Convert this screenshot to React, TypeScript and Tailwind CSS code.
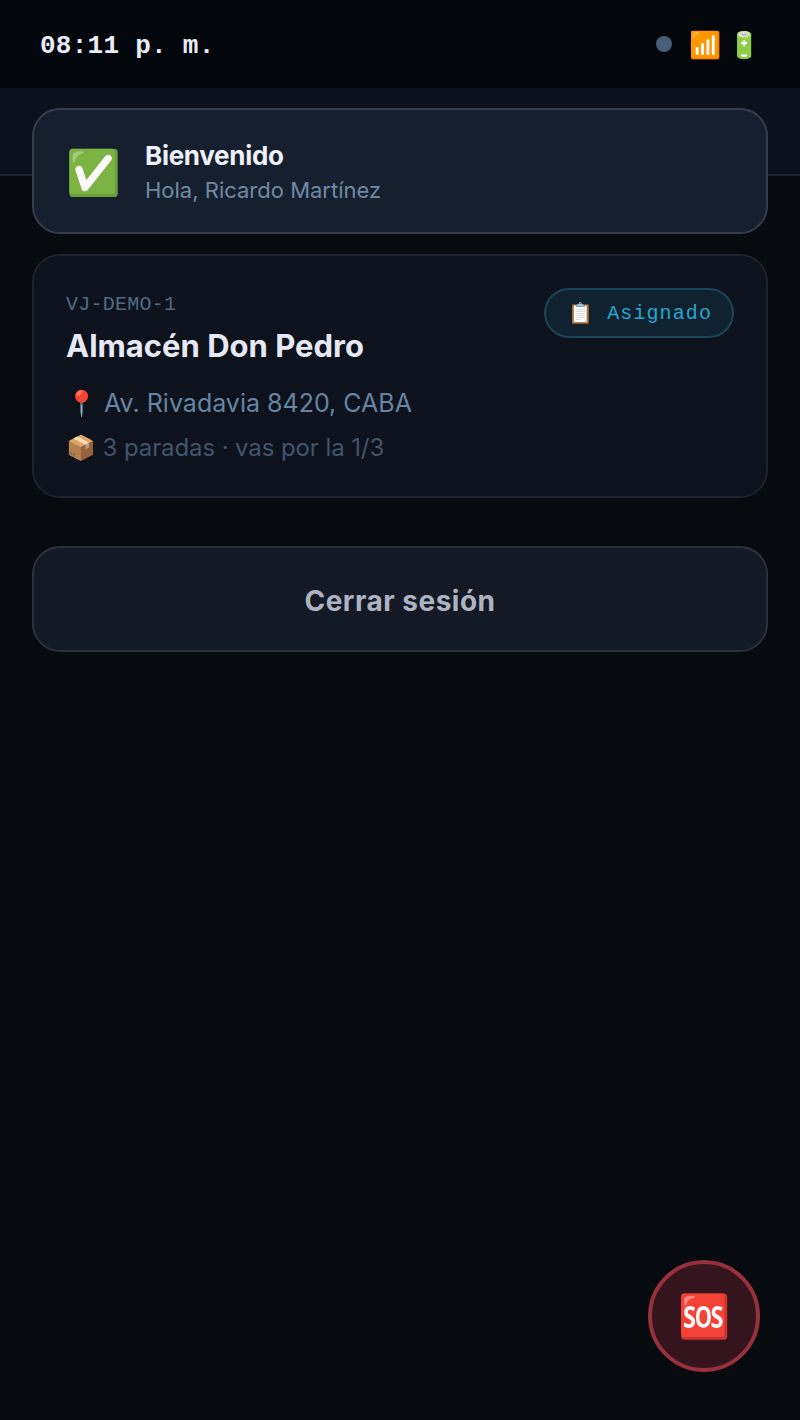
export default function App() {
  const sans = "font-['Inter','Noto_Sans',sans-serif]";
  return (
    <div className={`relative flex h-[1420px] w-[800px] flex-col overflow-hidden bg-[#070b10] ${sans}`}>
      <div className="flex h-[88px] items-center justify-between bg-[#03070b] pl-10 pr-10">
        <span className="pt-1 font-['Liberation_Mono',monospace] text-[26px] font-bold tracking-[0.26px] text-[#e8ecf8]">08:11 p. m.</span>
        <div className="flex items-center gap-[16.5px]">
          <span className="h-4 w-4 rounded-full bg-[#475f78]" />
          <div className="flex items-center gap-[7.5px] pt-[2px]">
            <span className="text-[26px] leading-none">📶</span>
            <span className="text-[26px] leading-none">🔋</span>
          </div>
        </div>
      </div>
      <div className="h-[88px] border-b-2 border-[#1a202c] bg-[#0c111b]" />

      <div className="absolute left-8 right-8 top-[108px] z-10 flex h-[126px] items-center gap-6 rounded-[28px] border-2 border-[#363d4d] bg-[#161f2d] px-8">
        <span className="pt-[2px] text-[44px] leading-none">✅</span>
        <div className="flex flex-col gap-[4px] pt-[2px]">
          <span className="text-[26px] font-bold leading-[32px] tracking-[-0.3px] text-[#eef1fa]">Bienvenido</span>
          <span className="text-[22px] leading-[28px] text-[#6f8aa5]">Hola, Ricardo Martínez</span>
        </div>
      </div>

      <div className="flex flex-col gap-12 px-8 pt-[78px]">
        <div className="flex h-[244px] items-start justify-between rounded-[28px] border-2 border-[#1c222e] bg-[#0d121c] px-8 pt-8">
          <div className="flex flex-col pt-[3px]">
            <span className="font-['Liberation_Mono',monospace] text-[20px] leading-[28px] tracking-[0.25px] text-[#4f6b85]">VJ-DEMO-1</span>
            <span className="mt-[6px] text-[31px] font-bold leading-[42px] text-[#e6e9f5]">Almacén Don Pedro</span>
            <span className="mt-[19px] text-[25px] leading-[34px] text-[#6585a3]">📍 Av. Rivadavia 8420, CABA</span>
            <span className="mt-[12px] text-[24px] leading-[32px] tracking-[-0.1px] text-[#3f566c]">📦 3 paradas · vas por la 1/3</span>
          </div>
          <div className="flex h-[50px] items-center gap-[14px] rounded-full border-2 border-[#1a4557] bg-[#10222f] pl-[22px] pr-[20px]">
            <span className="text-[20px] leading-none">📋</span>
            <span className="pt-[2px] font-['Liberation_Mono',monospace] text-[20px] tracking-[1.1px] text-[#27a6cf]">Asignado</span>
          </div>
        </div>
        <div className="flex h-[106px] items-center justify-center rounded-[28px] border-2 border-[#2a313f] bg-[#131a25] pt-1 text-[28px] font-bold tracking-[0.5px] text-[#aeb3c2]">
          Cerrar sesión
        </div>
      </div>

      <div className="absolute left-[648px] top-[1260px] flex h-[112px] w-[112px] items-center justify-center rounded-full border-4 border-[#98303c] bg-[#35151d]">
        <span className="text-[42px] leading-none">🆘</span>
      </div>
    </div>
  );
}
